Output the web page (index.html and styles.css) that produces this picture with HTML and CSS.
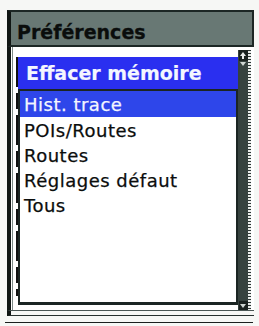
FILE: index.html
```html
<!DOCTYPE html>
<html lang="fr">
<head>
<meta charset="utf-8">
<title>Préférences</title>
<link rel="stylesheet" href="styles.css">
</head>
<body>
<div class="device">
  <div class="titlebar">Préférences</div>
  <div class="screen">
    <div class="gutter">
      <div class="rail-gray"></div>
      <div class="rail-dash"></div>
    </div>
    <div class="main">
      <div class="header">Effacer mémoire</div>
      <ul class="list">
        <li class="row selected">Hist. trace</li>
        <li class="row">POIs/Routes</li>
        <li class="row">Routes</li>
        <li class="row">Réglages défaut</li>
        <li class="row">Tous</li>
      </ul>
    </div>
    <div class="scroll">
      <div class="arrow up">
        <svg width="8" height="10" viewBox="0 0 8 10"><path d="M4 1 L7 5 H5 V8 H3 V5 H1 Z" fill="#e8ecea"/></svg>
      </div>
      <div class="mini-down"><svg width="6" height="4" viewBox="0 0 6 4"><path d="M0 0 H6 L3 4 Z" fill="#cfd6d3"/></svg></div>
      <div class="track"></div>
      <div class="arrow down">
        <svg width="8" height="8" viewBox="0 0 8 8"><path d="M1 2 H7 L4 6 Z" fill="#cfd6d3"/></svg>
      </div>
    </div>
    <div class="stipple"></div>
  </div>
  <div class="base"></div>
</div>
<div class="floor"></div>
</body>
</html>
```
FILE: styles.css
```css
html, body {
  margin: 0;
  padding: 0;
  background: #f6f7f5;
}
body {
  width: 259px;
  height: 326px;
  overflow: hidden;
  font-family: "DejaVu Sans", "Liberation Sans", sans-serif;
}
.device {
  margin: 10px 0 0 7px;
  width: 247px;
}
.titlebar {
  box-sizing: border-box;
  height: 37px;
  background: #687874;
  border-top: 2px solid #1c2725;
  border-right: 2px solid #1c2725;
  border-left: 4px solid #101614;
  border-bottom: 2px solid #1c2725;
  padding: 7px 0 0 6px;
  font-size: 19px;
  line-height: 27px;
  font-weight: bold;
  color: #0a0d0c;
  -webkit-text-stroke: 0.3px #0a0d0c;
}
.screen {
  display: flex;
  height: 263px;
  border-left: 4px solid #101614;
  border-bottom: 1px solid #4a5654;
  background: #ffffff;
}
.gutter {
  width: 7px;
  display: flex;
}
.rail-gray {
  width: 1px;
  margin-left: 1px;
  background: #7d8986;
}
.rail-dash {
  width: 2px;
  margin: 10px 0 14px 3px;
  background: repeating-linear-gradient(to bottom, #111 0 30px, transparent 30px 36px, #111 36px 52px, transparent 52px 58px);
}
.main {
  width: 220px;
  padding-top: 10px;
}
.header {
  height: 32px;
  box-sizing: border-box;
  background: #2a2ff0;
  color: #f4f6ff;
  font-weight: bold;
  font-size: 19px;
  line-height: 31px;
  padding: 1px 0 0 8px;
  -webkit-text-stroke: 0.2px #f4f6ff;
}
.list {
  list-style: none;
  margin: 0;
  padding: 0;
  height: 216px;
  box-sizing: border-box;
  border: 2px solid #1b2523;
  border-bottom-width: 3px;
}
.row {
  height: 25px;
  line-height: 25px;
  padding-left: 4px;
  font-size: 18px;
  letter-spacing: 0.5px;
  color: #0b0d0c;
  -webkit-text-stroke: 0.25px #0b0d0c;
  padding-top: 1px;
  box-sizing: border-box;
}
.row.selected {
  background: #2e46ea;
  color: #f4f6ff;
  -webkit-text-stroke: 0.25px #f4f6ff;
  height: 26px;
}
.scroll {
  width: 10px;
  margin-top: 3px;
  background: #36423f;
  display: flex;
  flex-direction: column;
  align-items: center;
}
.arrow {
  width: 9px;
  height: 11px;
  background: #1a2220;
  display: flex;
  align-items: center;
  justify-content: center;
}
.mini-down {
  height: 5px;
  display: flex;
  align-items: center;
}
.track {
  flex: 1;
}
.arrow.down {
  height: 9px;
}
.stipple {
  width: 3px;
  margin-top: 3px;
  background: repeating-linear-gradient(to bottom, #2c3634 0 1px, #e9ecea 1px 3px);
}
.base {
  height: 4px;
  border-left: 4px solid #101614;
  border-bottom: 1px solid #26302e;
  width: 243px;
}
.floor {
  margin: 6px 0 0 5px;
  width: 248px;
  height: 1px;
  background: #1a1f1e;
}
```
